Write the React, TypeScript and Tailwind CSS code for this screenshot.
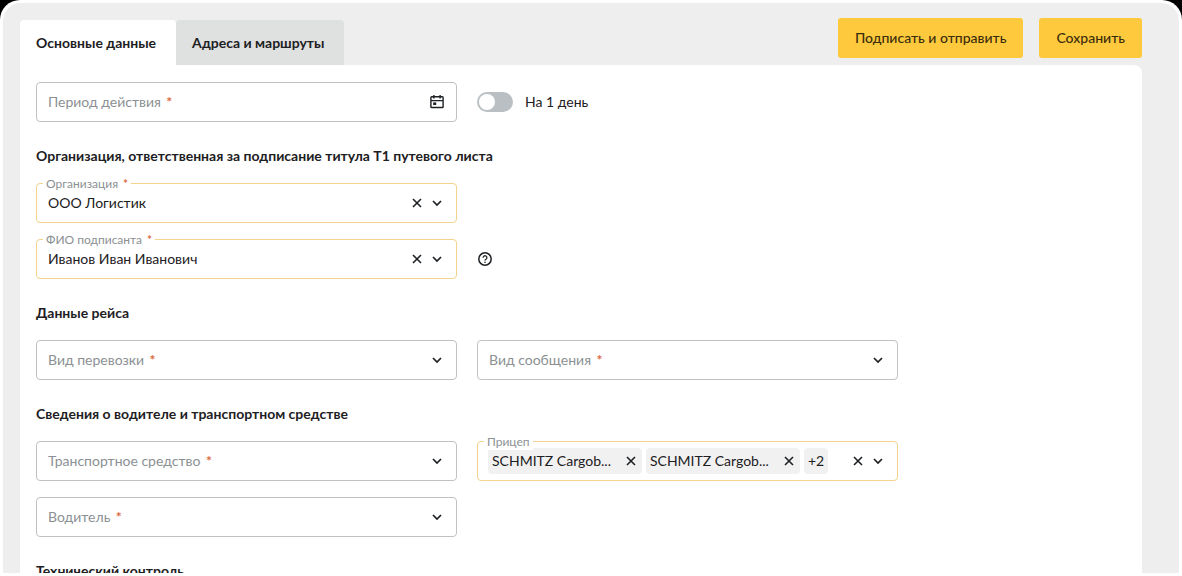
import { useState } from 'react';
import type { ReactNode } from 'react';

function Chevron() {
  return (
    <svg viewBox="0 0 20 20" className="size-5" fill="none" stroke="currentColor" strokeWidth="1.7" aria-hidden="true">
      <path d="M6 8l4 4 4-4" />
    </svg>
  );
}

function Cross() {
  return (
    <svg viewBox="0 0 20 20" className="size-5" fill="none" stroke="currentColor" strokeWidth="1.6" aria-hidden="true">
      <path d="M6 6l8 8M14 6l-8 8" />
    </svg>
  );
}

function CalendarIcon() {
  return (
    <svg viewBox="0 0 20 20" className="size-5" aria-hidden="true">
      <g fill="none" stroke="currentColor" strokeWidth="1.4">
        <rect x="3.9" y="4.7" width="12.2" height="10.8" rx="0.8" />
        <path d="M4 8.6h12M6.9 2.9v3.6M13.1 2.9v3.6" />
      </g>
      <rect x="6.2" y="10.4" width="3" height="2.6" fill="currentColor" />
    </svg>
  );
}

function HelpIcon() {
  return (
    <svg viewBox="0 0 16 16" className="size-4" fill="none" stroke="currentColor" strokeWidth="1.5" aria-hidden="true">
      <circle cx="8" cy="8" r="6.2" />
      <path d="M6.1 6.7a1.9 1.9 0 1 1 2.9 1.6c-.7.4-1 .7-1 1.3" strokeWidth="1.3" />
      <circle cx="8" cy="11.2" r="0.8" fill="currentColor" stroke="none" />
    </svg>
  );
}

function Required() {
  return <span className="ml-0.5 font-bold text-[#dc6a3f]"> *</span>;
}

type FieldProps = {
  id: string;
  label: string;
  required?: boolean;
  filled?: boolean;
  children: ReactNode;
};

function Field({ id, label, required, filled, children }: FieldProps) {
  return (
    <div
      className={
        filled
          ? 'relative flex h-10 items-center rounded-sm border border-[#f4d38c] bg-white pr-[9px]'
          : 'relative flex h-10 items-center rounded-sm border border-[#bfc2c4] bg-white pr-[9px]'
      }
    >
      <label
        id={`${id}-label`}
        htmlFor={id}
        className={
          filled
            ? 'pointer-events-none absolute -top-2 left-1.5 bg-white px-[3px] text-xs leading-4 text-[#8b9093]'
            : 'pointer-events-none absolute inset-y-0 left-[11px] flex items-center whitespace-pre text-sm text-[#8b9093]'
        }
      >
        {label}
        {required && <Required />}
      </label>
      {children}
    </div>
  );
}

const controlClass = 'h-full min-w-0 flex-1 appearance-none bg-transparent pl-[11px] text-sm text-[#1d2023] outline-none';

type SelectFieldProps = { id: string; label: string; required?: boolean; options: string[]; initial?: string };

function SelectField({ id, label, required, options, initial = '' }: SelectFieldProps) {
  const [value, setValue] = useState(initial);
  return (
    <Field id={id} label={label} required={required} filled={value !== ''}>
      <select id={id} value={value} onChange={(e) => setValue(e.target.value)} className={controlClass}>
        <option value="" />
        {options.map((o) => (
          <option key={o}>{o}</option>
        ))}
      </select>
      {value !== '' && (
        <button type="button" aria-label="Очистить" onClick={() => setValue('')}>
          <Cross />
        </button>
      )}
      <span className="pointer-events-none">
        <Chevron />
      </span>
    </Field>
  );
}

function Chip({ text }: { text: string }) {
  return (
    <span className="flex h-[26px] min-w-0 items-center rounded-sm bg-[#f1f1f1] pr-px pl-1">
      <span className="truncate">{text}</span>
      <button type="button" aria-label="Убрать" className="ml-2.5">
        <Cross />
      </button>
    </span>
  );
}

function Heading({ children }: { children: ReactNode }) {
  return <h2 className="mt-6 mb-[17px] text-sm leading-5 font-bold">{children}</h2>;
}

function Row({ children }: { children: ReactNode }) {
  return <div className="grid max-w-[862px] grid-cols-2 items-center gap-x-5 gap-y-4">{children}</div>;
}

export default function App() {
  return (
    <div className="h-screen bg-black font-['Lato','Noto_Sans',sans-serif] text-sm text-[#1d2023]">
      <div className="h-full overflow-hidden rounded-t-[20px] bg-white p-[3px]">
        <div className="flex h-full flex-col rounded-t-[18px] bg-[#eeeeee] pr-[37px] pl-[17px]">
          <header className="flex items-start justify-between pt-[15px]">
            <nav role="tablist" className="mt-0.5 flex font-bold">
              <button type="button" role="tab" aria-selected="true" className="h-[45px] rounded-t-sm bg-white pr-5 pl-4">
                Основные данные
              </button>
              <button type="button" role="tab" aria-selected="false" className="h-[45px] rounded-t-sm bg-[#dfe1e1] pr-5 pl-4">
                Адреса и маршруты
              </button>
            </nav>
            <div className="flex gap-4 font-medium text-[#3a2d0c]">
              <button type="button" className="h-10 rounded-[3px] bg-[#fec93c] px-[17px]">
                Подписать и отправить
              </button>
              <button type="button" className="h-10 rounded-[3px] bg-[#fec93c] px-[17px]">
                Сохранить
              </button>
            </div>
          </header>

          <main className="min-h-0 flex-1 overflow-y-auto rounded-tr-lg bg-white px-4 pt-[17px] [scrollbar-width:none]">
            <Row>
              <Field id="period" label="Период действия" required>
                <input id="period" type="text" className={controlClass} />
                <button type="button" aria-label="Открыть календарь">
                  <CalendarIcon />
                </button>
              </Field>
              <label className="flex items-center gap-3">
                <input
                  type="checkbox"
                  role="switch"
                  className="h-5 w-9 appearance-none rounded-full bg-[#b9bfc2] p-0.5 before:block before:size-4 before:rounded-full before:bg-white checked:bg-[#fec93c] checked:before:translate-x-4"
                />
                На 1 день
              </label>
            </Row>

            <Heading>Организация, ответственная за подписание титула Т1 путевого листа</Heading>
            <Row>
              <SelectField id="org" label="Организация" required options={['ООО Логистик']} initial="ООО Логистик" />
              <span />
              <SelectField
                id="signer"
                label="ФИО подписанта"
                required
                options={['Иванов Иван Иванович']}
                initial="Иванов Иван Иванович"
              />
              <button type="button" aria-label="Справка" className="justify-self-start">
                <HelpIcon />
              </button>
            </Row>

            <Heading>Данные рейса</Heading>
            <Row>
              <SelectField id="transport-kind" label="Вид перевозки" required options={[]} />
              <SelectField id="message-kind" label="Вид сообщения" required options={[]} />
            </Row>

            <Heading>Сведения о водителе и транспортном средстве</Heading>
            <Row>
              <SelectField id="vehicle" label="Транспортное средство" required options={[]} />
              <Field id="trailer" label="Прицеп" filled>
                <div className="flex min-w-0 flex-1 items-center gap-1 pl-2.5">
                  <Chip text="SCHMITZ Cargob..." />
                  <Chip text="SCHMITZ Cargob..." />
                  <span className="flex h-[26px] shrink-0 items-center rounded-sm bg-[#f1f1f1] px-1">+2</span>
                </div>
                <button type="button" aria-label="Очистить">
                  <Cross />
                </button>
                <button type="button" id="trailer" aria-labelledby="trailer-label">
                  <Chevron />
                </button>
              </Field>
              <SelectField id="driver" label="Водитель" required options={[]} />
            </Row>

            <Heading>Технический контроль</Heading>
          </main>
        </div>
      </div>
    </div>
  );
}
